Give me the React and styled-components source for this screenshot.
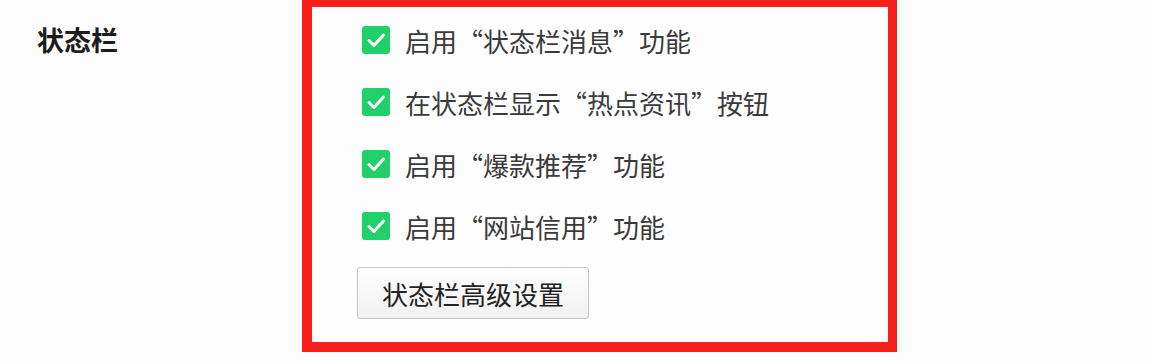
import React from "react";
import styled, { createGlobalStyle } from "styled-components";

const GlobalStyle = createGlobalStyle`
  html, body {
    margin: 0;
    padding: 0;
    background: #fcfcfd;
    font-family: "Noto Sans CJK SC", "Noto Sans", sans-serif;
  }
`;

const Page = styled.div`
  display: flex;
  width: 1152px;
  height: 364px;
  overflow: hidden;
  background: #fcfcfd;
`;

const Label = styled.div`
  width: 265px;
  padding-left: 37px;
  padding-top: 22px;
  font-size: 27px;
  line-height: 36px;
  font-weight: 700;
  color: #1c1c1c;
`;

const Box = styled.div`
  box-sizing: border-box;
  width: 595px;
  height: 355px;
  margin-top: -3px;
  border: 10px solid #f71f19;
  border-right-width: 9px;
  border-bottom-width: 10px;
  background: #fdfdfe;
  padding: 2px 0 0 45px;
  display: flex;
  flex-direction: column;
`;

const Row = styled.label`
  display: flex;
  align-items: center;
  gap: 15px;
  height: 62px;
  padding-left: 5px;
  font-size: 26px;
  color: #3a3a3a;
  white-space: nowrap;
`;

const Check = styled.span`
  width: 28px;
  height: 28px;
  border-radius: 3px;
  background: #22d06b;
  display: flex;
  align-items: center;
  justify-content: center;
  flex-shrink: 0;
`;

const Button = styled.button`
  box-sizing: border-box;
  align-self: flex-start;
  margin-top: 10px;
  width: 232px;
  height: 52px;
  border: 1px solid #c4c4c4;
  border-radius: 3px;
  background: linear-gradient(#fefefe, #f1f1f1);
  font-family: inherit;
  font-size: 26px;
  color: #222;
  padding: 0;
`;

const items = [
  "启用“状态栏消息”功能",
  "在状态栏显示“热点资讯”按钮",
  "启用“爆款推荐”功能",
  "启用“网站信用”功能",
];

function CheckMark() {
  return (
    <svg width="28" height="28" viewBox="0 0 28 28">
      <path
        d="M7 14.5 L12 19.5 L21.5 9"
        fill="none"
        stroke="#fff"
        strokeWidth="3"
        strokeLinecap="round"
        strokeLinejoin="round"
      />
    </svg>
  );
}

export default function App() {
  return (
    <Page lang="zh-CN">
      <GlobalStyle />
      <Label>状态栏</Label>
      <Box>
        {items.map((text) => (
          <Row key={text}>
            <Check>
              <CheckMark />
            </Check>
            <span>{text}</span>
          </Row>
        ))}
        <Button>状态栏高级设置</Button>
      </Box>
    </Page>
  );
}
